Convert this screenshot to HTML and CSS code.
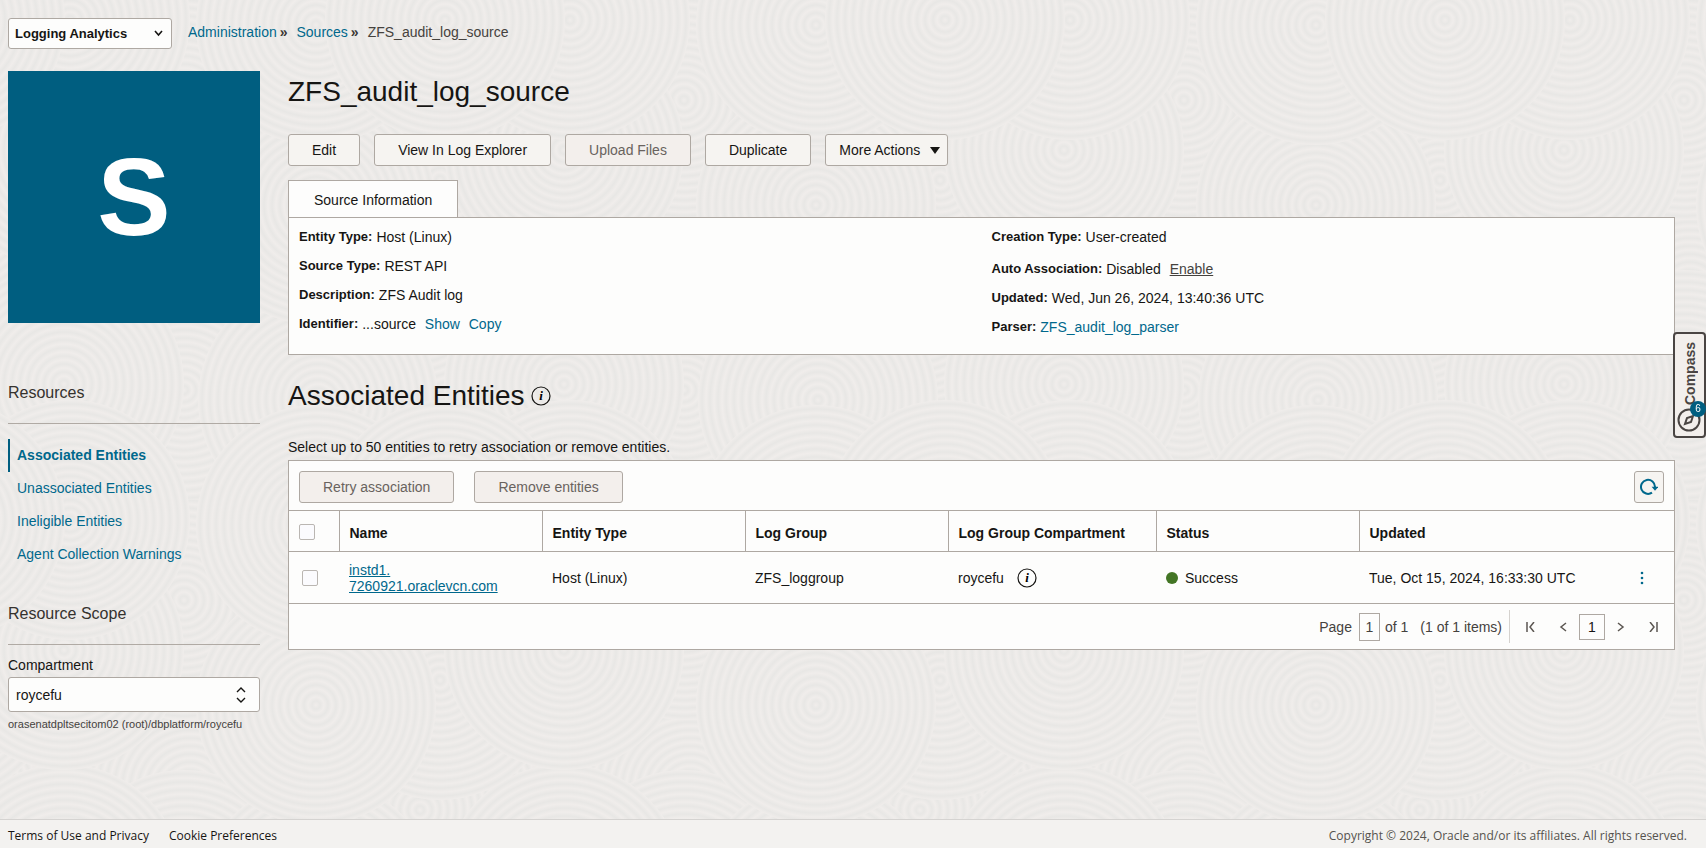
FILE: index.html
```html
<!DOCTYPE html>
<html lang="en">
<head>
  <meta charset="UTF-8">
  <meta name="viewport" content="width=device-width, initial-scale=1.0">
  <title>ZFS_audit_log_source</title>
  <link rel="stylesheet" href="styles.css">
</head>
<body>

  <!-- Top bar -->
  <header class="topbar">
    <select class="service-select" aria-label="Service">
      <option>Logging Analytics</option>
    </select>
    <nav class="breadcrumb" aria-label="Breadcrumb">
      <a href="#">Administration</a><span class="sep">»</span>
      <a href="#">Sources</a><span class="sep">»</span>
      <span class="current">ZFS_audit_log_source</span>
    </nav>
  </header>

  <div class="layout">
    <!-- Sidebar -->
    <aside class="sidebar">
      <div class="tile">S</div>

      <h2 class="side-title">Resources</h2>
      <ul class="side-nav">
        <li class="active"><a href="#">Associated Entities</a></li>
        <li><a href="#">Unassociated Entities</a></li>
        <li><a href="#">Ineligible Entities</a></li>
        <li><a href="#">Agent Collection Warnings</a></li>
      </ul>

      <h2 class="side-title">Resource Scope</h2>
      <label class="scope-label" for="compartment">Compartment</label>
      <select class="scope-select" id="compartment">
        <option>roycefu</option>
      </select>
      <p class="scope-path">orasenatdpltsecitom02 (root)/dbplatform/roycefu</p>
    </aside>

    <!-- Main content -->
    <main class="content">
      <h1>ZFS_audit_log_source</h1>

      <div class="actions">
        <button type="button" class="btn">Edit</button>
        <button type="button" class="btn">View In Log Explorer</button>
        <button type="button" class="btn" disabled>Upload Files</button>
        <button type="button" class="btn">Duplicate</button>
        <button type="button" class="btn btn-menu">More Actions
          <svg width="10" height="7" viewBox="0 0 10 7" aria-hidden="true"><path d="M0 0h10L5 7z" fill="currentColor"/></svg>
        </button>
      </div>

      <button type="button" class="tab">Source Information</button>
      <section class="info">
        <dl>
          <div><dt>Entity Type:</dt><dd>Host (Linux)</dd></div>
          <div><dt>Source Type:</dt><dd>REST API</dd></div>
          <div><dt>Description:</dt><dd>ZFS Audit log</dd></div>
          <div><dt>Identifier:</dt><dd>...source <a href="#">Show</a> <a href="#">Copy</a></dd></div>
        </dl>
        <dl>
          <div class="first"><dt>Creation Type:</dt><dd>User-created</dd></div>
          <div><dt>Auto Association:</dt><dd>Disabled <a class="enable" href="#">Enable</a></dd></div>
          <div><dt>Updated:</dt><dd>Wed, Jun 26, 2024, 13:40:36 UTC</dd></div>
          <div><dt>Parser:</dt><dd><a class="parser" href="#">ZFS_audit_log_parser</a></dd></div>
        </dl>
      </section>

      <h2 class="section-title">Associated Entities
        <svg class="info-icon" width="20" height="20" viewBox="0 0 20 20" aria-hidden="true">
          <circle cx="10" cy="10" r="9" fill="none" stroke="currentColor" stroke-width="1.2"/>
          <text x="10" y="14" text-anchor="middle">i</text>
        </svg>
      </h2>
      <p class="hint">Select up to 50 entities to retry association or remove entities.</p>

      <section class="panel">
        <div class="toolbar">
          <button type="button" class="btn" disabled>Retry association</button>
          <button type="button" class="btn" disabled>Remove entities</button>
          <button type="button" class="btn refresh" aria-label="Refresh">
            <svg width="18" height="18" viewBox="0 0 18 18" aria-hidden="true">
              <path d="M12 14.600A7 7 0 1 1 15 9" fill="none" stroke="currentColor" stroke-width="2"/>
              <path d="M11.600 8.800h6.800L15 12.800z" fill="currentColor"/>
            </svg>
          </button>
        </div>

        <table>
          <colgroup>
            <col class="col-check">
            <col class="col-std">
            <col class="col-std">
            <col class="col-std">
            <col class="col-wide">
            <col class="col-std">
            <col>
            <col class="col-menu">
          </colgroup>
          <thead>
            <tr>
              <th><input type="checkbox" aria-label="Select all"></th>
              <th>Name</th>
              <th>Entity Type</th>
              <th>Log Group</th>
              <th>Log Group Compartment</th>
              <th>Status</th>
              <th colspan="2">Updated</th>
            </tr>
          </thead>
          <tbody>
            <tr>
              <td class="check"><input type="checkbox" aria-label="Select entity"></td>
              <td><a class="entity" href="#">instd1.<br>7260921.oraclevcn.com</a></td>
              <td>Host (Linux)</td>
              <td>ZFS_loggroup</td>
              <td>
                <span class="inline">roycefu
                  <svg class="info-icon" width="20" height="20" viewBox="0 0 20 20" aria-hidden="true">
                    <circle cx="10" cy="10" r="9" fill="none" stroke="currentColor" stroke-width="1.2"/>
                    <text x="10" y="14" text-anchor="middle">i</text>
                  </svg>
                </span>
              </td>
              <td><span class="status">Success</span></td>
              <td>Tue, Oct 15, 2024, 16:33:30 UTC</td>
              <td class="menu">
                <button type="button" class="kebab" aria-label="Row actions">
                  <svg width="4" height="14" viewBox="0 0 4 14" aria-hidden="true"><g fill="currentColor"><circle cx="2" cy="2" r="1.300"/><circle cx="2" cy="7" r="1.300"/><circle cx="2" cy="12" r="1.300"/></g></svg>
                </button>
              </td>
            </tr>
          </tbody>
        </table>

        <div class="pager">
          <label for="page">Page</label>
          <input type="text" id="page" class="page-input" value="1">
          <span>of 1</span>
          <span class="items">(1 of 1 items)</span>
          <div class="pager-nav">
            <button type="button" aria-label="First page"><svg width="10" height="10" viewBox="0 0 10 10"><path d="M1 0v10M8 0L4 5l4 5"/></svg></button>
            <button type="button" aria-label="Previous page"><svg width="10" height="10" viewBox="0 0 10 10"><path d="M8 1L3 5l5 4"/></svg></button>
            <button type="button" class="page-num">1</button>
            <button type="button" aria-label="Next page"><svg width="10" height="10" viewBox="0 0 10 10"><path d="M2 1l5 4-5 4"/></svg></button>
            <button type="button" aria-label="Last page"><svg width="10" height="10" viewBox="0 0 10 10"><path d="M9 0v10M2 0l4 5-4 5"/></svg></button>
          </div>
        </div>
      </section>
    </main>
  </div>

  <!-- Compass tab over the right edge -->
  <button type="button" class="compass">
    <span class="compass-text">Compass</span>
    <svg class="compass-icon" width="24" height="24" viewBox="0 0 24 24" aria-hidden="true">
      <circle cx="12" cy="12" r="10.500" fill="none" stroke="currentColor" stroke-width="2"/>
      <path d="M16 8l-2 6-6 2 2-6z" fill="none" stroke="currentColor" stroke-width="2"/>
    </svg>
    <span class="badge">6</span>
  </button>

  <footer class="footer">
    <a href="#">Terms of Use and Privacy</a>
    <a href="#">Cookie Preferences</a>
    <span class="copyright">Copyright © 2024, Oracle and/or its affiliates. All rights reserved.</span>
  </footer>

</body>
</html>
```

FILE: styles.css
```css
* {
  box-sizing: border-box;
}

body {
  margin: 0;
  min-height: 100vh;
  display: flex;
  flex-direction: column;
  font-family: "Liberation Sans", Arial, sans-serif;
  font-size: 14px;
  line-height: 16px;
  color: #161513;
  background-color: #eeebe9;
  /* swirl texture, repeats every 500px */
  background-image: url("data:image/svg+xml,%3Csvg xmlns='http://www.w3.org/2000/svg' xmlns:xlink='http://www.w3.org/1999/xlink' width='500' height='500' viewBox='0 0 500 500'%3E%3Cdefs%3E%3CradialGradient id='g' gradientUnits='userSpaceOnUse' cx='0' cy='0' r='8' spreadMethod='repeat'%3E%3Cstop offset='0' stop-color='%23f0edeb'/%3E%3Cstop offset='.5' stop-color='%23e8e7e5'/%3E%3Cstop offset='1' stop-color='%23f0edeb'/%3E%3C/radialGradient%3E%3Ccircle id='c' r='120' fill='url(%23g)'/%3E%3C/defs%3E%3Cg id='t'%3E%3Cuse xlink:href='%23c' x='240' y='450'/%3E%3Cuse xlink:href='%23c' x='240' y='-50'/%3E%3Cuse xlink:href='%23c' x='190' y='290'/%3E%3Cuse xlink:href='%23c' x='420' y='310'/%3E%3Cuse xlink:href='%23c' x='-80' y='310'/%3E%3Cuse xlink:href='%23c' x='184' y='390'/%3E%3Cuse xlink:href='%23c' x='184' y='100'/%3E%3Cuse xlink:href='%23c' x='64' y='384'/%3E%3Cuse xlink:href='%23c' x='564' y='384'/%3E%3Cuse xlink:href='%23c' x='64' y='-116'/%3E%3Cuse xlink:href='%23c' x='564' y='-116'/%3E%3Cuse xlink:href='%23c' x='318' y='400'/%3E%3Cuse xlink:href='%23c' x='440' y='180'/%3E%3Cuse xlink:href='%23c' x='-60' y='180'/%3E%3Cuse xlink:href='%23c' x='316' y='205'/%3E%3Cuse xlink:href='%23c' x='64' y='150'/%3E%3Cuse xlink:href='%23c' x='564' y='150'/%3E%3Cuse xlink:href='%23c' x='316' y='25'/%3E%3Cuse xlink:href='%23c' x='316' y='525'/%3E%3Cuse xlink:href='%23c' x='70' y='20'/%3E%3Cuse xlink:href='%23c' x='570' y='20'/%3E%3Cuse xlink:href='%23c' x='70' y='520'/%3E%3Cuse xlink:href='%23c' x='570' y='520'/%3E%3Cuse xlink:href='%23c' x='445' y='20'/%3E%3Cuse xlink:href='%23c' x='-55' y='20'/%3E%3Cuse xlink:href='%23c' x='445' y='520'/%3E%3Cuse xlink:href='%23c' x='-55' y='520'/%3E%3C/g%3E%3C/svg%3E");
}

h1, h2, p, dl, dd, ul {
  margin: 0;
  padding: 0;
  font-weight: normal;
}

button, select, input {
  font: inherit;
  color: inherit;
  margin: 0;
}

a {
  color: #00688c;
  text-decoration: none;
}

/* Top bar */
.topbar {
  display: flex;
  align-items: flex-start;
  gap: 16px;
  padding: 18px 8px 22px;
}

.service-select, .scope-select {
  appearance: none;
  border: 1px solid #aea8a2;
  border-radius: 3px;
  background-color: #fdfdfc;
  background-repeat: no-repeat;
}

.service-select {
  width: 164px;
  height: 31px;
  padding: 0 6px;
  font-size: 13px;
  font-weight: bold;
  background-image: url("data:image/svg+xml,%3Csvg xmlns='http://www.w3.org/2000/svg' width='9' height='7'%3E%3Cpath d='M1 1l3.500 4L8 1' fill='none' stroke='%23161513' stroke-width='1.6'/%3E%3C/svg%3E");
  background-position: right 8px top 11px;
}

.breadcrumb {
  display: flex;
  padding-top: 6px;
}

.breadcrumb .sep {
  margin: 0 9px 0 3px;
  font-weight: bold;
  color: #3b3834;
}

.breadcrumb .current {
  color: #45423e;
}

.layout {
  flex: 1;
  display: flex;
  gap: 28px;
  padding: 0 31px 40px 8px;
}

/* Sidebar */
.sidebar {
  width: 252px;
  flex-shrink: 0;
}

.tile {
  aspect-ratio: 1;
  display: flex;
  align-items: center;
  justify-content: center;
  margin-bottom: 60px;
  background-color: #005e80;
  color: #fff;
  font-size: 110px;
  line-height: 110px;
  font-weight: bold;
}

.side-title {
  padding-bottom: 20px;
  border-bottom: 1px solid #b0aaa4;
  font-size: 16px;
  line-height: 20px;
  color: #35322e;
}

.side-nav {
  list-style: none;
  padding: 15px 0 33px;
}

.side-nav li {
  height: 33px;
  padding: 8px 9px;
}

.side-nav .active {
  padding-left: 7px;
  border-left: 2px solid #005e80;
  font-weight: bold;
}

.scope-label {
  display: block;
  margin: 12px 0 4px;
}

.scope-select {
  width: 100%;
  height: 35px;
  padding: 0 7px;
  background-image: url("data:image/svg+xml,%3Csvg xmlns='http://www.w3.org/2000/svg' width='10' height='16'%3E%3Cpath d='M1 5l4-4 4 4M1 11l4 4 4-4' fill='none' stroke='%23161513' stroke-width='1.4'/%3E%3C/svg%3E");
  background-position: right 13px center;
}

.scope-path {
  margin-top: 4px;
  font-size: 11px;
  color: #45423e;
}

/* Main content */
.content {
  flex: 1;
  min-width: 0;
}

h1, .section-title {
  font-size: 28px;
  line-height: 32px;
}

h1 {
  padding-top: 5px;
}

.actions {
  display: flex;
  gap: 14px;
  margin: 26px 0 14px;
}

.btn {
  height: 32px;
  padding: 0 23px;
  border: 1px solid #aea8a2;
  border-radius: 3px;
  background-color: #f6f4f1;
}

.btn:disabled {
  background-color: #f3efec;
  color: #69635e;
}

.btn-menu {
  display: flex;
  align-items: center;
  gap: 10px;
  padding: 0 7px 0 13px;
}

.tab {
  display: block;
  height: 37px;
  padding: 2px 25px 0;
  border: 1px solid #aea8a2;
  border-bottom: 0;
  background-color: #fdfdfc;
}

.info {
  display: grid;
  grid-template-columns: 1fr 1fr;
  padding: 4px 0 13px;
  border: 1px solid #aea8a2;
  background-color: #fdfdfc;
}

.info dl {
  padding: 0 10px;
}

.info dl > div {
  display: flex;
  align-items: center;
  gap: 4px;
  height: 29px;
}

.info .first {
  margin-bottom: 3px;
}

.info dt {
  font-size: 13px;
  font-weight: bold;
}

.info dd a {
  margin-left: 5px;
}

.info dd .enable {
  color: #45423e;
  text-decoration: underline;
}

.info dd .parser {
  margin-left: 0;
}

.section-title {
  display: flex;
  align-items: center;
  gap: 6px;
  margin-top: 25px;
}

.info-icon text {
  font: italic bold 13px "Liberation Serif", serif;
}

.hint {
  margin: 27px 0 5px;
}

/* Entities table */
.panel {
  border: 1px solid #aea8a2;
  background-color: #fdfdfc;
}

.toolbar {
  display: flex;
  gap: 20px;
  padding: 10px 10px 7px;
}

.toolbar .refresh {
  display: flex;
  align-items: center;
  justify-content: center;
  width: 30px;
  padding: 0;
  margin-left: auto;
  color: #00688c;
}

table {
  width: 100%;
  table-layout: fixed;
  border-collapse: collapse;
}

.col-check {
  width: 50px;
}

.col-std {
  width: 203px;
}

.col-wide {
  width: 208px;
}

.col-menu {
  width: 42px;
}

th, td {
  padding: 0 10px;
  text-align: left;
}

th {
  height: 41px;
  padding-top: 3px;
  border: 1px solid #aea8a2;
}

th:first-child {
  border-left: 0;
  padding-top: 1px;
}

th:last-child {
  border-right: 0;
}

td {
  height: 52px;
  border-bottom: 1px solid #aea8a2;
}

td.check {
  padding-left: 13px;
}

td.menu {
  padding: 0 8px;
}

input[type="checkbox"] {
  appearance: none;
  display: block;
  width: 16px;
  height: 16px;
  border: 1px solid #bab6b2;
  border-radius: 2px;
  background-color: #fbfbfe;
}

.entity {
  text-decoration: underline;
}

.inline {
  display: flex;
  align-items: center;
  gap: 13px;
}

.status {
  display: flex;
  align-items: center;
  gap: 7px;
}

.status::before {
  content: "";
  width: 12px;
  height: 12px;
  border-radius: 50%;
  background-color: #437525;
}

.kebab {
  display: flex;
  padding: 0;
  border: 0;
  background: none;
  color: #00688c;
}

.pager {
  display: flex;
  align-items: center;
  justify-content: flex-end;
  height: 45px;
  padding-right: 16px;
  color: #45423e;
}

.page-input {
  width: 21px;
  height: 28px;
  margin: 0 5px 0 7px;
  padding: 0;
  border: 1px solid #aea8a2;
  background-color: #fdfdfc;
  text-align: center;
}

.items {
  margin: 0 7px 0 12px;
}

.pager-nav {
  display: flex;
  align-items: center;
  gap: 11px;
  height: 33px;
  padding-left: 16px;
  border-left: 1px solid #d5d2ce;
}

.pager-nav button {
  display: flex;
  align-items: center;
  justify-content: center;
  padding: 0;
  border: 0;
  background: none;
}

.pager-nav button:first-child {
  margin-right: 11px;
}

.pager-nav button:last-child {
  margin-left: 11px;
}

.pager-nav .page-num {
  width: 26px;
  height: 26px;
  border: 1px solid #aea8a2;
  color: #161513;
}

.pager-nav path {
  fill: none;
  stroke: #5b5651;
  stroke-width: 1.5;
}

/* Compass */
.compass {
  position: fixed;
  top: 332px;
  right: 0;
  width: 33px;
  height: 106px;
  padding: 0;
  border: 2px solid #4a4543;
  border-radius: 4px;
  background-color: #f3efec;
  color: #4a4543;
}

.compass-text {
  position: absolute;
  top: 8px;
  left: 7px;
  writing-mode: vertical-rl;
  transform: rotate(180deg);
  font-weight: bold;
}

.compass-icon {
  position: absolute;
  left: 2px;
  bottom: 4px;
}

.badge {
  position: absolute;
  top: 67px;
  right: -2px;
  width: 16px;
  height: 16px;
  border-radius: 50%;
  background-color: #005e80;
  color: #fff;
  font-size: 10px;
}

/* Footer */
.footer {
  display: flex;
  align-items: center;
  gap: 20px;
  height: 29px;
  padding: 4px 19px 0 8px;
  border-top: 1px solid #d5d3d1;
  background-color: #f3f2f0;
  font-family: "Open Sans", "Noto Sans", sans-serif;
  font-size: 12px;
}

.footer a {
  color: #161513;
}

.copyright {
  margin-left: auto;
  color: #55524e;
}
```
